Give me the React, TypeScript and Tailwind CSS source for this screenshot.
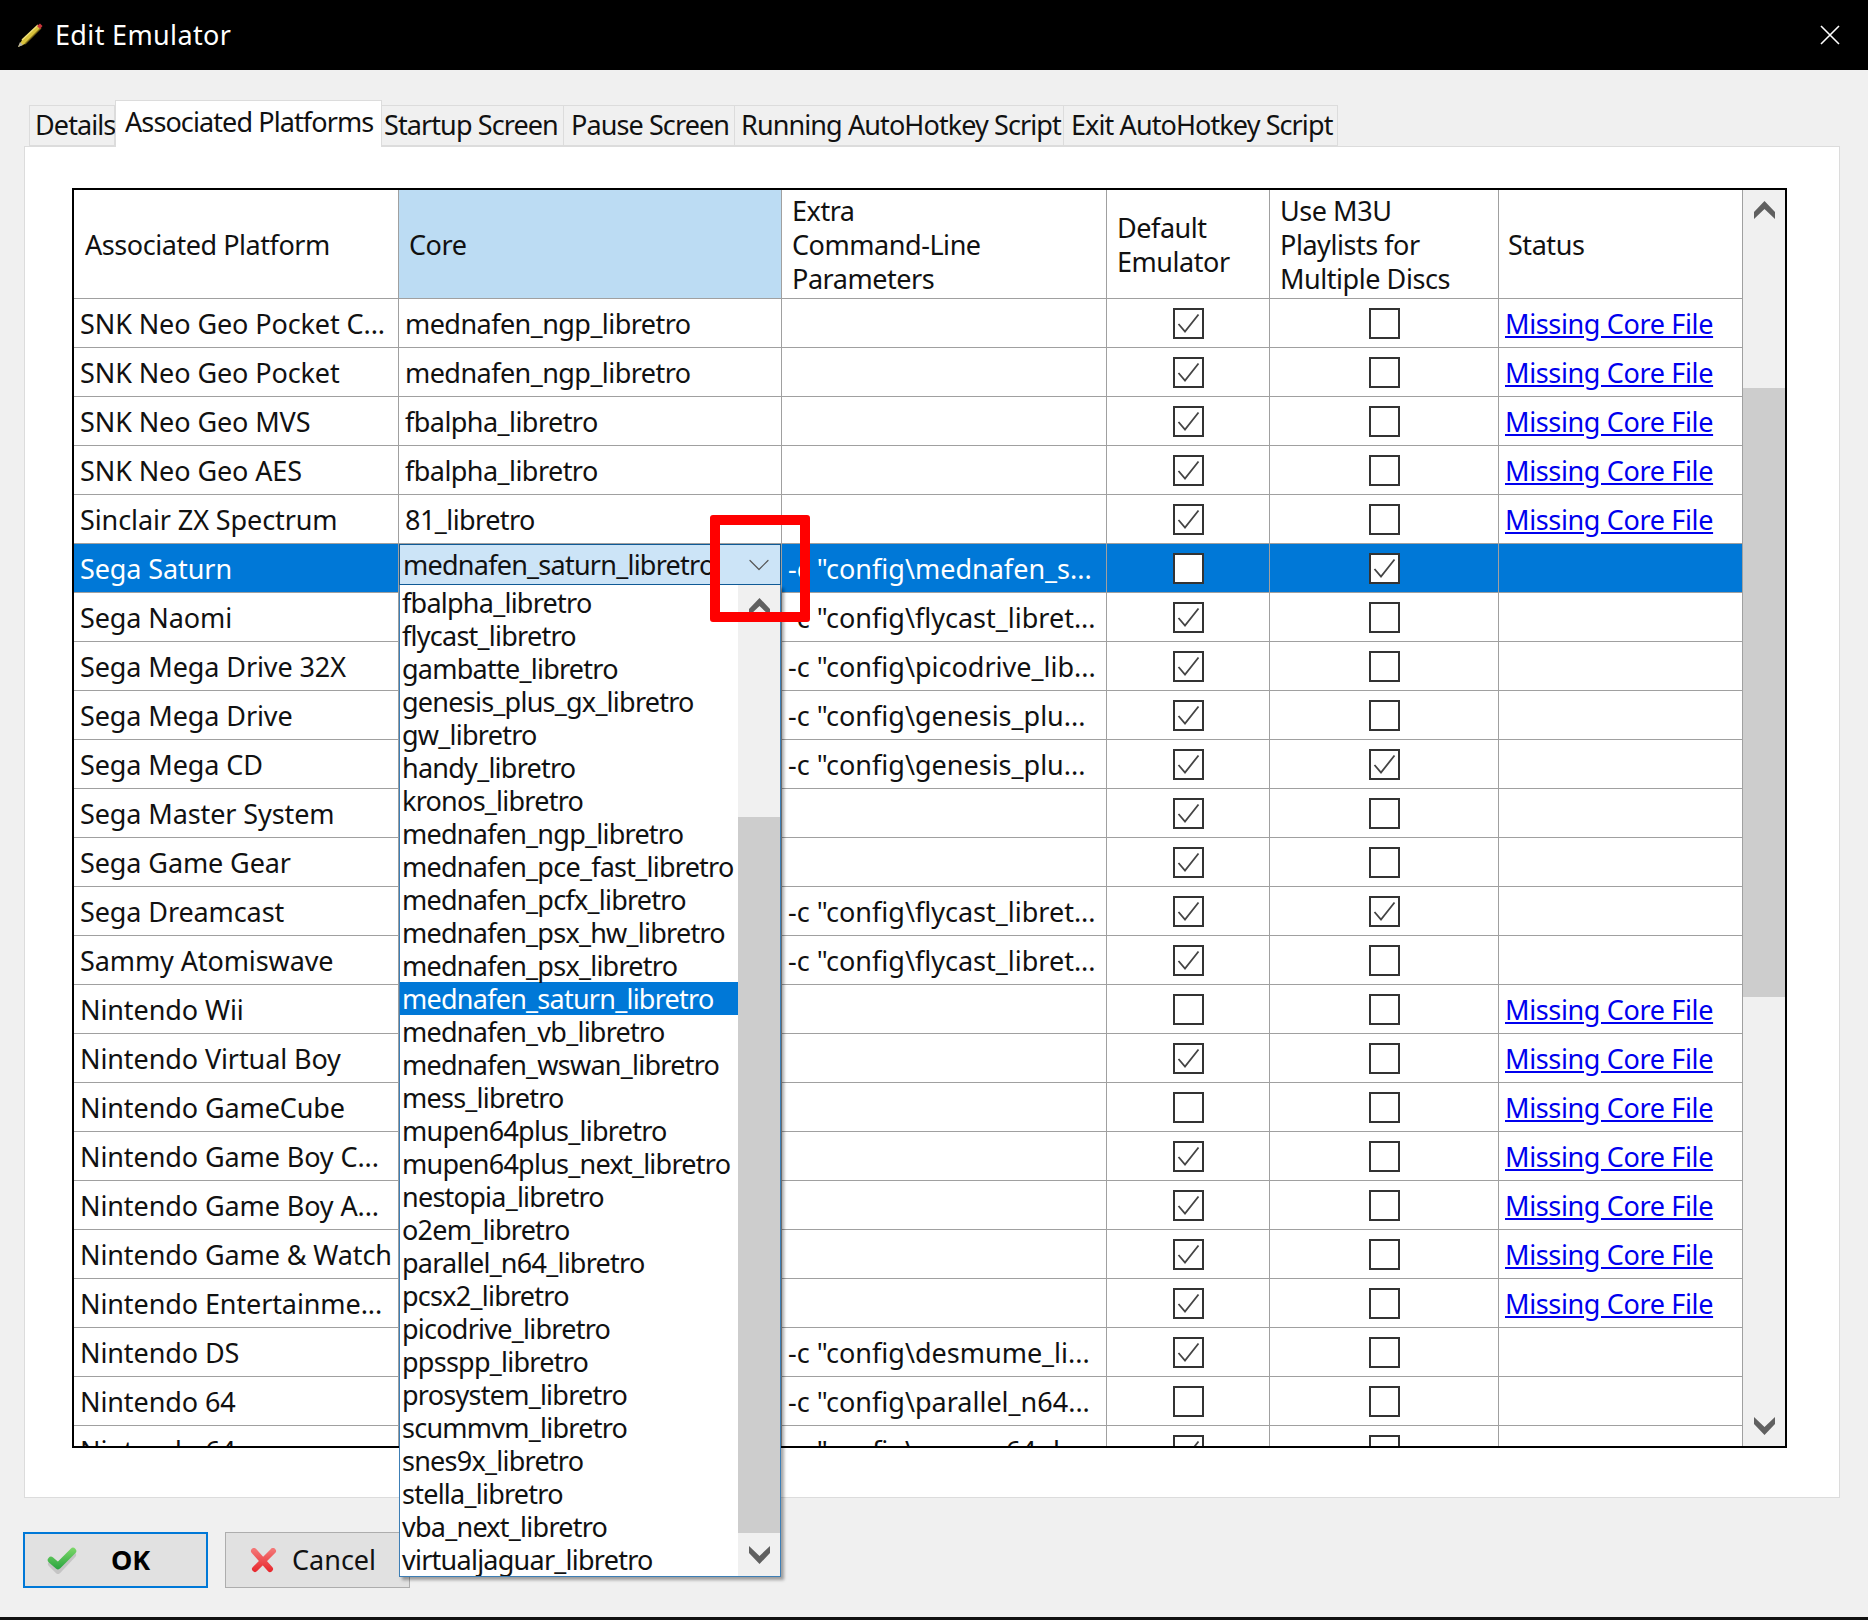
import { ChevronDown } from "lucide-react";

interface Row {
  platform: string;
  core?: string;
  extra?: string;
  isDefault: boolean;
  m3u: boolean;
  missing?: boolean;
  selected?: boolean;
}

const rows: Row[] = [
  { platform: "SNK Neo Geo Pocket C...", core: "mednafen_ngp_libretro", isDefault: true, m3u: false, missing: true },
  { platform: "SNK Neo Geo Pocket", core: "mednafen_ngp_libretro", isDefault: true, m3u: false, missing: true },
  { platform: "SNK Neo Geo MVS", core: "fbalpha_libretro", isDefault: true, m3u: false, missing: true },
  { platform: "SNK Neo Geo AES", core: "fbalpha_libretro", isDefault: true, m3u: false, missing: true },
  { platform: "Sinclair ZX Spectrum", core: "81_libretro", isDefault: true, m3u: false, missing: true },
  { platform: "Sega Saturn", extra: '-c "config\\mednafen_s...', isDefault: false, m3u: true, selected: true },
  { platform: "Sega Naomi", extra: '-c "config\\flycast_libret...', isDefault: true, m3u: false },
  { platform: "Sega Mega Drive 32X", extra: '-c "config\\picodrive_lib...', isDefault: true, m3u: false },
  { platform: "Sega Mega Drive", extra: '-c "config\\genesis_plu...', isDefault: true, m3u: false },
  { platform: "Sega Mega CD", extra: '-c "config\\genesis_plu...', isDefault: true, m3u: true },
  { platform: "Sega Master System", isDefault: true, m3u: false },
  { platform: "Sega Game Gear", isDefault: true, m3u: false },
  { platform: "Sega Dreamcast", extra: '-c "config\\flycast_libret...', isDefault: true, m3u: true },
  { platform: "Sammy Atomiswave", extra: '-c "config\\flycast_libret...', isDefault: true, m3u: false },
  { platform: "Nintendo Wii", isDefault: false, m3u: false, missing: true },
  { platform: "Nintendo Virtual Boy", isDefault: true, m3u: false, missing: true },
  { platform: "Nintendo GameCube", isDefault: false, m3u: false, missing: true },
  { platform: "Nintendo Game Boy C...", isDefault: true, m3u: false, missing: true },
  { platform: "Nintendo Game Boy A...", isDefault: true, m3u: false, missing: true },
  { platform: "Nintendo Game & Watch", isDefault: true, m3u: false, missing: true },
  { platform: "Nintendo Entertainme...", isDefault: true, m3u: false, missing: true },
  { platform: "Nintendo DS", extra: '-c "config\\desmume_li...', isDefault: true, m3u: false },
  { platform: "Nintendo 64", extra: '-c "config\\parallel_n64...', isDefault: false, m3u: false },
  { platform: "Nintendo 64", extra: '-c "config\\mupen64plu...', isDefault: true, m3u: false },
];

const cores = [
  "fbalpha_libretro",
  "flycast_libretro",
  "gambatte_libretro",
  "genesis_plus_gx_libretro",
  "gw_libretro",
  "handy_libretro",
  "kronos_libretro",
  "mednafen_ngp_libretro",
  "mednafen_pce_fast_libretro",
  "mednafen_pcfx_libretro",
  "mednafen_psx_hw_libretro",
  "mednafen_psx_libretro",
  "mednafen_saturn_libretro",
  "mednafen_vb_libretro",
  "mednafen_wswan_libretro",
  "mess_libretro",
  "mupen64plus_libretro",
  "mupen64plus_next_libretro",
  "nestopia_libretro",
  "o2em_libretro",
  "parallel_n64_libretro",
  "pcsx2_libretro",
  "picodrive_libretro",
  "ppsspp_libretro",
  "prosystem_libretro",
  "scummvm_libretro",
  "snes9x_libretro",
  "stella_libretro",
  "vba_next_libretro",
  "virtualjaguar_libretro",
];

const tabs = [
  { label: "Details", className: "w-[86px] pl-[5px]" },
  { label: "Associated Platforms", className: "w-[267px] pl-[9px]", active: true },
  { label: "Startup Screen", className: "w-[182px] pl-[2px]" },
  { label: "Pause Screen", className: "w-[171px] pl-[7px]" },
  { label: "Running AutoHotkey Script", className: "w-[329px] pl-[6px]" },
  { label: "Exit AutoHotkey Script", className: "w-[274px] pl-[7px]" },
];

function Chevron({ down }: { down?: boolean }) {
  return (
    <svg width="21" height="18" viewBox="0 0 21 18" className={down ? "rotate-180" : ""}>
      <path d="M10.5 0 L21 11 V18 L10.5 8 L0 18 V11 Z" fill="#606060" />
    </svg>
  );
}

function Checkbox({ checked }: { checked: boolean }) {
  return (
    <div className="w-[31px] h-[31px] border-2 border-[#333333] bg-white flex items-center justify-center">
      {checked && (
        <svg width="27" height="27" viewBox="0 0 27 27" fill="none">
          <path d="M3.5 14 L10 21.5 L23.5 4.5" stroke="#444444" strokeWidth="1.8" />
        </svg>
      )}
    </div>
  );
}

function Pencil() {
  return (
    <svg width="28" height="28" viewBox="0 0 28 28" className="ml-[16px]">
      <path d="M2 26 L6 19 L22 4 L25 7 L9 23 Z" fill="#d8c23c" />
      <path d="M6 19 L22 4" stroke="#f2e27a" strokeWidth="1.5" />
      <path d="M9 23 L25 7" stroke="#7d6a18" strokeWidth="1.2" />
      <path d="M21 5 L24 2.5 L26.5 5 L24 8 Z" fill="#c8343a" />
      <path d="M2 26 L4 21 L7 24 Z" fill="#b9b3a0" />
    </svg>
  );
}

function GreenCheck() {
  return (
    <svg width="30" height="27" viewBox="0 0 30 27" fill="none" className="blur-[0.5px]">
      <defs>
        <linearGradient id="okg" gradientUnits="userSpaceOnUse" x1="0" y1="0" x2="0" y2="24">
          <stop offset="0" stopColor="#7fd96a" />
          <stop offset="1" stopColor="#22a03c" />
        </linearGradient>
      </defs>
      <path d="M4 15 L11 22 L26 6" stroke="#a8a8a8" strokeWidth="6" strokeLinecap="round" strokeLinejoin="round" transform="translate(0 2)" opacity="0.5" />
      <path d="M4 13 L11 19 L26 4" stroke="url(#okg)" strokeWidth="6.5" strokeLinecap="round" strokeLinejoin="round" />
    </svg>
  );
}

function RedCross() {
  return (
    <svg width="28" height="25" viewBox="0 0 28 25" fill="none" className="blur-[0.5px]">
      <defs>
        <linearGradient id="xg" gradientUnits="userSpaceOnUse" x1="0" y1="0" x2="0" y2="24">
          <stop offset="0" stopColor="#f47a7a" />
          <stop offset="1" stopColor="#e8262c" />
        </linearGradient>
      </defs>
      <path d="M5 3 L21 21 M24 3 L6 21" stroke="url(#xg)" strokeWidth="6" strokeLinecap="round" />
    </svg>
  );
}

function TableRow({ row }: { row: Row }) {
  const text = row.selected ? "text-white" : "text-[#111111]";
  const bg = row.selected ? "bg-[#0078d7]" : "bg-white";
  const cell = "h-full border-r border-[#a0a0a0] flex items-center shrink-0 whitespace-nowrap overflow-hidden";
  return (
    <div className={`flex h-[49px] shrink-0 border-b border-[#a0a0a0] ${bg} ${text}`}>
      <div className={`${cell} w-[325px] pl-[6px] pt-[3px] tracking-[-0.1px]`}>{row.platform}</div>
      <div className={`${cell} w-[383px] pl-[6px] pt-[3px] tracking-[-0.55px]`}>{row.core}</div>
      <div className={`${cell} w-[325px] pl-[6px] pt-[3px]`}>{row.extra}</div>
      <div className={`${cell} w-[163px] justify-center`}>
        <Checkbox checked={row.isDefault} />
      </div>
      <div className={`${cell} w-[229px] justify-center`}>
        <Checkbox checked={row.m3u} />
      </div>
      <div className={`${cell} w-[244px] pl-[6px] pt-[3px] tracking-[-0.35px]`}>
        {row.missing && <a className="text-[#0000ee] underline">Missing Core File</a>}
      </div>
    </div>
  );
}

function HeaderRow() {
  const cell = "h-full border-r border-[#a0a0a0] flex items-center shrink-0 leading-[34px] pt-[1px] tracking-[-0.45px]";
  return (
    <div className="flex h-[109px] shrink-0 border-b border-[#a0a0a0] bg-white text-[#111111]">
      <div className={`${cell} w-[325px] pl-[11px]`}>Associated Platform</div>
      <div className={`${cell} w-[383px] pl-[10px] bg-[#bcdcf3]`}>Core</div>
      <div className={`${cell} w-[325px] pl-[10px]`}>
        <div>
          Extra
          <br />
          Command-Line
          <br />
          Parameters
        </div>
      </div>
      <div className={`${cell} w-[163px] pl-[10px]`}>
        <div>
          Default
          <br />
          Emulator
        </div>
      </div>
      <div className={`${cell} w-[229px] pl-[10px]`}>
        <div>
          Use M3U
          <br />
          Playlists for
          <br />
          Multiple Discs
        </div>
      </div>
      <div className={`${cell} w-[244px] pl-[9px]`}>Status</div>
    </div>
  );
}

function CoreDropdown() {
  return (
    <div className="absolute left-[399px] top-[544px] w-[382px] z-10 tracking-[-0.75px]">
      <div className="h-[41px] bg-[#cce4f7] border border-[#0f5a96] flex items-center pl-[3px] pt-[1px] text-[#111111] relative">
        mednafen_saturn_libretro
        <ChevronDown className="absolute right-[3px] top-[2px] text-[#555555]" size={36} strokeWidth={0.8} />
      </div>
      <div className="h-[992px] flex bg-white border border-t-0 border-[#3d7eb5] shadow-[3px_3px_3px_rgba(0,0,0,0.35)]">
        <div className="flex-1 pt-[1px] overflow-hidden">
          {cores.map((c) => (
            <div
              key={c}
              className={`h-[33px] leading-[33px] pl-[2px] whitespace-nowrap ${
                c === "mednafen_saturn_libretro" ? "bg-[#0078d7] text-white" : "text-[#111111]"
              }`}
            >
              {c}
            </div>
          ))}
        </div>
        <div className="w-[42px] flex flex-col bg-[#f0f0f0]">
          <div className="h-[232px] shrink-0 flex justify-center pt-[13px]">
            <Chevron />
          </div>
          <div className="h-[716px] shrink-0 bg-[#cdcdcd]" />
          <div className="flex-1 flex justify-center pt-[13px]">
            <Chevron down />
          </div>
        </div>
      </div>
    </div>
  );
}

export default function App() {
  return (
    <div className="relative w-[1868px] h-[1620px] overflow-hidden bg-[#f0f0f0] text-[27px] font-['Noto_Sans',sans-serif] flex flex-col">
      <div className="h-[70px] shrink-0 bg-black flex items-center text-white">
        <Pencil />
        <span className="ml-[11px] tracking-[0.35px]">Edit Emulator</span>
        <svg width="22" height="22" viewBox="0 0 22 22" className="ml-auto mr-[27px]">
          <path d="M2 2 L20 20 M20 2 L2 20" stroke="white" strokeWidth="1.6" />
        </svg>
      </div>

      <div className="flex items-end h-[76px] pl-[29px] shrink-0 relative z-[1] tracking-[-0.9px]">
        {tabs.map((t) =>
          t.active ? (
            <div
              key={t.label}
              className={`${t.className} h-[47px] -mb-px bg-white border border-b-0 border-[#dcdcdc] flex items-center text-[#111111] pb-[4px] whitespace-nowrap`}
            >
              {t.label}
            </div>
          ) : (
            <div
              key={t.label}
              className={`${t.className} h-[41px] bg-[#f0f0f0] border border-[#dcdcdc] border-l-0 first:border-l flex items-center text-[#111111] whitespace-nowrap`}
            >
              {t.label}
            </div>
          ),
        )}
      </div>

      <div className="ml-[24px] w-[1816px] h-[1352px] shrink-0 bg-white border border-[#dcdcdc] pl-[47px] pt-[41px]">
        <div className="w-[1715px] h-[1260px] border-2 border-black flex overflow-hidden">
          <div className="w-[1669px] shrink-0 flex flex-col">
            <HeaderRow />
            {rows.map((r, i) => (
              <TableRow key={i} row={r} />
            ))}
          </div>
          <div className="w-[42px] shrink-0 bg-[#f0f0f0] flex flex-col">
            <div className="h-[198px] shrink-0 flex justify-center pt-[11px]">
              <Chevron />
            </div>
            <div className="h-[609px] shrink-0 bg-[#cdcdcd]" />
            <div className="flex-1 flex justify-center items-end pb-[11px]">
              <Chevron down />
            </div>
          </div>
        </div>
      </div>

      <div className="flex gap-[17px] pl-[23px] pt-[34px] text-[#111111]">
        <div className="w-[185px] h-[56px] bg-[#e1e1e1] border-2 border-[#0078d7] flex items-center pl-[22px]">
          <GreenCheck />
          <span className="ml-[34px] font-bold text-black">OK</span>
        </div>
        <div className="w-[185px] h-[56px] bg-[#e1e1e1] border border-[#adadad] flex items-center pl-[23px]">
          <RedCross />
          <span className="ml-[15px]">Cancel</span>
        </div>
      </div>

      <div className="absolute left-0 bottom-0 w-full h-[3px] bg-[#111111]" />

      <CoreDropdown />
      <div className="absolute left-[710px] top-[515px] w-[100px] h-[107px] border-[10px] border-[#ff0000] rounded-[3px] z-20" />
    </div>
  );
}
